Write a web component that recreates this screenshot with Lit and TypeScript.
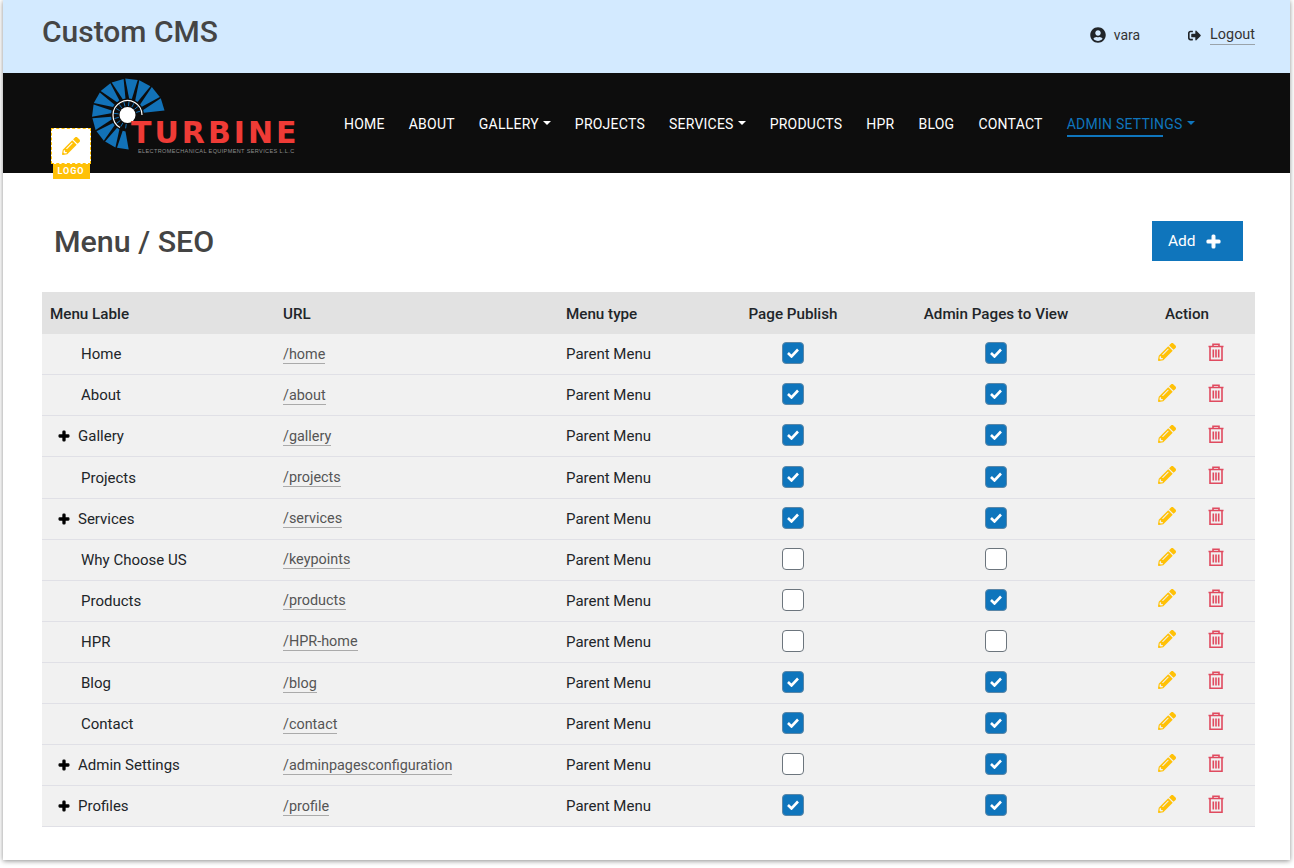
import { LitElement, html, css, svg } from "lit";
import { customElement } from "lit/decorators.js";

const PENCIL = "M497.9 142.1l-46.1 46.1c-4.7 4.7-12.3 4.7-17 0l-111-111c-4.7-4.7-4.7-12.3 0-17l46.1-46.1c18.7-18.7 49.1-18.7 67.9 0l60.1 60.1c18.8 18.7 18.8 49.1 0 67.9zM284.2 99.8L21.6 362.4.4 483.9c-2.9 16.4 11.4 30.6 27.8 27.8l121.5-21.3 262.6-262.6c4.7-4.7 4.7-12.3 0-17l-111-111c-4.8-4.7-12.4-4.7-17.1 0zM124.1 339.9c-5.5-5.5-5.5-14.3 0-19.8l154-154c5.5-5.5 14.3-5.5 19.8 0s5.5 14.3 0 19.8l-154 154c-5.5 5.5-14.3 5.5-19.8 0zM88 424h48v36.3l-64.5 11.3-31.1-31.1L51.7 376H88v48z";
const PLUS = "M416 208H272V64c0-17.67-14.33-32-32-32h-32c-17.67 0-32 14.33-32 32v144H32c-17.67 0-32 14.33-32 32v32c0 17.67 14.33 32 32 32h144v144c0 17.67 14.33 32 32 32h32c17.67 0 32-14.33 32-32V304h144c17.67 0 32-14.33 32-32v-32c0-17.67-14.33-32-32-32z";
const USER = "M248 8C111 8 0 119 0 256s111 248 248 248 248-111 248-248S385 8 248 8zm0 96c48.6 0 88 39.4 88 88s-39.4 88-88 88-88-39.4-88-88 39.4-88 88-88zm0 344c-58.7 0-111.3-26.6-146.5-68.2 18.8-35.4 55.6-59.8 98.5-59.8 2.4 0 4.8.4 7.1 1.1 13 4.2 26.6 6.9 40.9 6.9 14.3 0 28-2.7 40.9-6.9 2.3-.7 4.7-1.1 7.1-1.1 42.9 0 79.7 24.4 98.5 59.8C359.3 421.4 306.7 448 248 448z";
const SIGNOUT = "M497 273L329 441c-15 15-41 4.5-41-17v-96H152c-13.3 0-24-10.7-24-24v-96c0-13.3 10.7-24 24-24h136V88c0-21.4 25.9-32 41-17l168 168c9.3 9.4 9.3 24.6 0 34zM192 436v-40c0-6.6-5.4-12-12-12H96c-17.7 0-32-14.3-32-32V160c0-17.7 14.3-32 32-32h84c6.6 0 12-5.4 12-12V76c0-6.6-5.4-12-12-12H96c-53 0-96 43-96 96v192c0 53 43 96 96 96h84c6.6 0 12-5.4 12-12z";

type Row = { label: string; url: string; pub: boolean; adm: boolean; plus?: boolean };
const ROWS: Row[] = [
  { label: "Home", url: "/home", pub: true, adm: true },
  { label: "About", url: "/about", pub: true, adm: true },
  { label: "Gallery", url: "/gallery", pub: true, adm: true, plus: true },
  { label: "Projects", url: "/projects", pub: true, adm: true },
  { label: "Services", url: "/services", pub: true, adm: true, plus: true },
  { label: "Why Choose US", url: "/keypoints", pub: false, adm: false },
  { label: "Products", url: "/products", pub: false, adm: true },
  { label: "HPR", url: "/HPR-home", pub: false, adm: false },
  { label: "Blog", url: "/blog", pub: true, adm: true },
  { label: "Contact", url: "/contact", pub: true, adm: true },
  { label: "Admin Settings", url: "/adminpagesconfiguration", pub: false, adm: true, plus: true },
  { label: "Profiles", url: "/profile", pub: true, adm: true, plus: true },
];
const NAV: { t: string; caret?: boolean; active?: boolean }[] = [
  { t: "HOME" }, { t: "ABOUT" }, { t: "GALLERY", caret: true }, { t: "PROJECTS" },
  { t: "SERVICES", caret: true }, { t: "PRODUCTS" }, { t: "HPR" }, { t: "BLOG" },
  { t: "CONTACT" }, { t: "ADMIN SETTINGS", caret: true, active: true },
];

function blades() {
  const cx = 36.5, cy = 38, n = 12, out = [];
  const rad = (d: number) => (d * Math.PI) / 180;
  for (let i = 0; i < n; i++) {
    const a0 = 88 + i * 22.3;
    const a1 = a0 + 19.8;
    const r1 = 34.5 + (i / n) * 3;
    const r0 = 16.5;
    const sk = 9;
    const p = [
      [cx + r0 * Math.cos(rad(a0 + sk)), cy + r0 * Math.sin(rad(a0 + sk))],
      [cx + r1 * Math.cos(rad(a0)), cy + r1 * Math.sin(rad(a0))],
      [cx + r1 * Math.cos(rad(a1)), cy + r1 * Math.sin(rad(a1))],
      [cx + r0 * Math.cos(rad(a1 + sk - 10)), cy + r0 * Math.sin(rad(a1 + sk - 10))],
    ].map((q) => q.map((v) => v.toFixed(1)).join(",")).join(" ");
    out.push(svg`<polygon points=${p} fill="#1272b8"/>`);
    const t = rad(a0 + 10);
    out.push(svg`<line x1=${cx + 9 * Math.cos(t)} y1=${cy + 9 * Math.sin(t)} x2=${cx + 13.5 * Math.cos(t)} y2=${cy + 13.5 * Math.sin(t)} stroke="#1272b8" stroke-width="1"/>`);
  }
  return out;
}

@customElement("app-root")
export class AppRoot extends LitElement {
  static styles = css`
    :host { display: block; width: 1294px; height: 868px; background: #fff; font-family: Roboto, "Liberation Sans", sans-serif; color: #212529; overflow: hidden; }
    .page { margin-left: 3px; width: 1287px; height: 860px; background: #fff; box-shadow: 0 1px 5px rgba(0,0,0,.45); display: flex; flex-direction: column; }
    .top { height: 73px; flex: none; background: #d3eaff; display: flex; align-items: center; padding: 0 35px 0 39px; box-sizing: border-box; }
    .brand { font-size: 30px; font-weight: 500; color: #454545; margin: -10px 0 0; flex: 1; }
    .who { display: flex; align-items: center; font-size: 14px; color: #333; margin-top: -4px; }
    .who svg { width: 16px; height: 16px; margin-right: 8px; margin-top: 1px; fill: #212529; }
    .out { display: flex; align-items: center; margin-left: 48px; color: #333; font-size: 14.4px; margin-top: -3px; }
    .out svg { width: 13px; height: 13px; margin-right: 9px; fill: #212529; }
    .out span { border-bottom: 1px solid #9aa3aa; line-height: 18px; }
    .nav { height: 100px; flex: none; background: #0d0d0d; position: relative; display: flex; padding-left: 341px; box-sizing: border-box; }
    .logo { position: absolute; left: 88px; top: 4px; width: 208px; height: 78px; }
    .logo svg { display: block; width: 80px; height: 78px; }
    .tb { position: absolute; left: 40px; top: 45px; font: 700 30px/22px "DejaVu Sans", sans-serif; letter-spacing: 3px; color: #ef3b36; white-space: nowrap; }
    .ts { position: absolute; left: 47px; top: 71px; font: 400 5.55px/6px "Liberation Sans", sans-serif; letter-spacing: .37px; color: #8e8e8e; white-space: nowrap; }
    .badge { position: absolute; left: 48px; top: 55px; width: 40px; display: flex; flex-direction: column; align-items: center; }
    .badge .box { width: 40px; height: 36px; box-sizing: border-box; background: #fff; border: 1px dashed #ffc107; display: flex; align-items: center; justify-content: center; }
    .badge .box svg { width: 18px; height: 18px; fill: #ffc107; }
    .badge .tag { width: 37px; height: 15px; background: #ffc107; color: #fff; font-size: 9px; font-weight: 700; letter-spacing: 1px; text-align: center; line-height: 15px; }
    .menu { display: flex; gap: 24px; align-items: flex-start; margin-top: 42px; }
    .item { position: relative; color: #fff; font-size: 14px; font-weight: 400; letter-spacing: .23px; line-height: 18px; white-space: nowrap; display: flex; align-items: center; }
    .caret { width: 0; height: 0; margin-left: 4px; margin-bottom: 2px; border-left: 4px solid transparent; border-right: 4px solid transparent; border-top: 4px solid currentColor; }
    .item.active { color: #0f75bc; }
    .item.active::after { content: ""; position: absolute; left: 0; top: 20px; width: 96px; height: 2px; background: #0f75bc; }
    .main { padding: 0 35px 0 39px; }
    .head { display: flex; justify-content: space-between; align-items: center; height: 119px; box-sizing: border-box; padding: 17px 12px 0; }
    h1 { margin: 2px 0 0; font-size: 30.4px; font-weight: 500; color: #444; line-height: 40px; }
    .add { width: 91px; height: 40px; background: #0f75bc; color: #fff; display: flex; align-items: center; padding-left: 16px; box-sizing: border-box; font-size: 15.5px; font-weight: 400; }
    .add svg { width: 13px; height: 13px; margin-left: 11px; fill: #fff; stroke: #fff; stroke-width: 40; overflow: visible; }
    .grid { display: grid; grid-template-columns: 233px 283px 142px 186px 220px 149px; align-items: center; }
    .hrow { height: 42.25px; padding-top: 1px; box-sizing: border-box; background: #e2e2e2; font-size: 15.2px; font-weight: 500; color: #212529; }
    .row { height: 41.08px; box-sizing: border-box; background: #f1f1f1; border-bottom: 1px solid #e0e0e6; font-size: 15px; color: #212529; }
    .c1 { padding-left: 8px; } .c2 { padding-left: 8px; } .c3 { padding-left: 8px; }
    .url-cell { padding: .3px 0 0 8px; }
    .ctr { text-align: center; display: flex; justify-content: center; }
    .chk { margin-top: -2px; }
    .act { padding-left: 13px; }
    .lab { padding-left: 39px; }
    .lab.p { padding-left: 17px; display: flex; align-items: center; }
    .lab svg { width: 10px; height: 10px; margin-right: 9px; fill: #000; stroke: #000; stroke-width: 50; overflow: visible; }
    .url { color: #555; font-size: 14.4px; border-bottom: 1px solid #aaa; line-height: 17px; display: inline-block; }
    .cb { width: 22px; height: 22px; box-sizing: border-box; border: 1px solid #6c757d; border-radius: 4px; background: #fff; display: flex; align-items: center; justify-content: center; }
    .cb.on { background: #0f75bc; border-color: #5a87a8; }
    .cb svg { width: 12px; height: 10px; fill: none; stroke: #fff; stroke-width: 2.6; }
    .icons { display: flex; gap: 32px; padding-left: 52px; margin-top: -5px; align-items: center; }
    .icons .pen { width: 18px; height: 18px; fill: #ffc107; }
    .icons .tr { width: 16px; height: 18px; fill: none; stroke: #e04a5f; stroke-width: 1.6; }
  `;

  render() {
    const plus = html`<svg viewBox="0 32 448 448"><path d=${PLUS}/></svg>`;
    return html`<div class="page">
      <div class="top">
        <div class="brand">Custom CMS</div>
        <div class="who"><svg viewBox="0 0 496 512"><path d=${USER}/></svg>vara</div>
        <div class="out"><svg viewBox="0 0 512 512"><path d=${SIGNOUT}/></svg><span>Logout</span></div>
      </div>
      <div class="nav">
        <div class="logo">
          <svg viewBox="0 0 80 78">
            ${blades()}
            <circle cx="36.5" cy="38" r="8" fill="#fff"/>
            <path d="M29 50.5A14.5 14.5 0 1 1 51 38" fill="none" stroke="#fff" stroke-width="1.2"/>
          </svg>
          <div class="tb">TURBINE</div>
          <div class="ts">ELECTROMECHANICAL EQUIPMENT SERVICES L.L.C</div>
        </div>
        <div class="badge">
          <div class="box"><svg viewBox="0 0 512 512"><path d=${PENCIL}/></svg></div>
          <div class="tag">LOGO</div>
        </div>
        <div class="menu">
          ${NAV.map((n) => html`<div class="item ${n.active ? "active" : ""}">${n.t}${n.caret ? html`<span class="caret"></span>` : ""}</div>`)}
        </div>
      </div>
      <div class="main">
        <div class="head">
          <h1>Menu / SEO</h1>
          <div class="add">Add${plus}</div>
        </div>
        <div class="grid hrow">
          <div class="c1">Menu Lable</div><div class="c2">URL</div><div class="c3">Menu type</div>
          <div class="ctr">Page Publish</div><div class="ctr">Admin Pages to View</div><div class="ctr act">Action</div>
        </div>
        ${ROWS.map((r) => html`<div class="grid row">
          <div class="lab ${r.plus ? "p" : ""}">${r.plus ? plus : ""}${r.label}</div>
          <div class="url-cell"><span class="url">${r.url}</span></div>
          <div class="c3">Parent Menu</div>
          <div class="ctr chk">${this.cb(r.pub)}</div>
          <div class="ctr chk">${this.cb(r.adm)}</div>
          <div class="icons">
            <svg class="pen" viewBox="0 0 512 512"><path d=${PENCIL}/></svg>
            <svg class="tr" viewBox="0 0 16 18"><path d="M.5 3.5h15M5 3.5V1.2h6v2.3M2 3.5v13.8h12V3.5M5.3 6.5v8M8 6.5v8M10.7 6.5v8"/></svg>
          </div>
        </div>`)}
      </div>
    </div>`;
  }

  cb(on: boolean) {
    return html`<div class="cb ${on ? "on" : ""}">${on ? html`<svg viewBox="0 0 12 10"><path d="M1 5l3.5 3.5L11 1.5"/></svg>` : ""}</div>`;
  }
}
